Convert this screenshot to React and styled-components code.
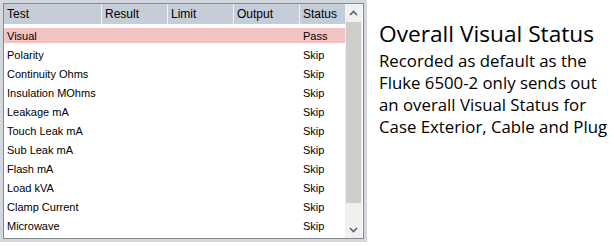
import React from "react";
import styled, { createGlobalStyle } from "styled-components";

const Global = createGlobalStyle`
  body {
    margin: 0;
    background: #ffffff;
  }
`;

const Page = styled.div`
  display: flex;
  width: 614px;
  height: 246px;
`;

const Frame = styled.div`
  width: 361px;
  height: 236px;
  border: 3px solid #d3d8de;
  display: flex;
`;

const Inner = styled.div`
  flex: 1;
  display: flex;
  border: 1px solid #828790;
  background: #ffffff;
  overflow: hidden;
`;

const Grid = styled.div`
  flex: 1;
  display: flex;
  flex-direction: column;
  font-family: "Liberation Sans", Arial, sans-serif;
  font-size: 11px;
  color: #000;
`;

const Row = styled.div`
  box-sizing: border-box;
  display: grid;
  grid-template-columns: 98px 66px 66px 66px 1fr;
  height: ${(p) => (p.head ? "20px" : "19px")};
  padding: ${(p) => (p.head ? "0" : "2px 0")};
  align-items: center;
  background: ${(p) => p.bg || "transparent"};
  background-clip: content-box;
  margin-bottom: ${(p) => (p.head ? "2px" : "0")};
`;

const HeadCell = styled.div`
  height: 100%;
  display: flex;
  align-items: center;
  padding-left: 3px;
  background: #c5ced8;
  border-right: 1px solid #eef2f6;
  font-size: 12px;
  &:last-child {
    border-right: none;
  }
`;

const Cell = styled.div`
  padding-left: 3px;
  white-space: nowrap;
`;

const Scroll = styled.div`
  width: 17px;
  display: flex;
  flex-direction: column;
  background: #f0f0f0;
  margin-right: 1px;
`;

const Arrow = styled.div`
  height: 17px;
  display: flex;
  align-items: center;
  justify-content: center;
`;

const Thumb = styled.div`
  height: 181px;
  margin: 1px 1px 0;
  background: #cdcdcd;
`;

const Track = styled.div`
  flex: 1;
`;

const Note = styled.div`
  padding: 23px 0 0 12px;
  font-family: "Open Sans", "Noto Sans", sans-serif;
  color: #000;
`;

const Title = styled.div`
  font-size: 22.7px;
  line-height: 22px;
`;

const Body = styled.div`
  margin-top: 5px;
  font-size: 16.8px;
  line-height: 22px;
`;

const rows = [
  "Visual",
  "Polarity",
  "Continuity Ohms",
  "Insulation MOhms",
  "Leakage mA",
  "Touch Leak mA",
  "Sub Leak mA",
  "Flash mA",
  "Load kVA",
  "Clamp Current",
  "Microwave",
];

const Chevron = ({ down }) => (
  <svg width="9" height="6" viewBox="0 0 9 6">
    <path
      d={down ? "M1 1 L4.5 4.5 L8 1" : "M1 5 L4.5 1.5 L8 5"}
      fill="none"
      stroke="#606060"
      strokeWidth="1.6"
    />
  </svg>
);

export default function App() {
  return (
    <Page>
      <Global />
      <Frame>
        <Inner>
          <Grid>
            <Row head>
              <HeadCell>Test</HeadCell>
              <HeadCell>Result</HeadCell>
              <HeadCell>Limit</HeadCell>
              <HeadCell>Output</HeadCell>
              <HeadCell>Status</HeadCell>
            </Row>
            {rows.map((name, i) => (
              <Row key={name} bg={i === 0 ? "#f4c4c4" : undefined}>
                <Cell>{name}</Cell>
                <Cell />
                <Cell />
                <Cell />
                <Cell>{i === 0 ? "Pass" : "Skip"}</Cell>
              </Row>
            ))}
          </Grid>
          <Scroll>
            <Arrow>
              <Chevron />
            </Arrow>
            <Thumb />
            <Track />
            <Arrow>
              <Chevron down />
            </Arrow>
          </Scroll>
        </Inner>
      </Frame>
      <Note>
        <Title>Overall Visual Status</Title>
        <Body>
          Recorded as default as the
          <br />
          Fluke 6500-2 only sends out
          <br />
          an overall Visual Status for
          <br />
          Case Exterior, Cable and Plug
        </Body>
      </Note>
    </Page>
  );
}
